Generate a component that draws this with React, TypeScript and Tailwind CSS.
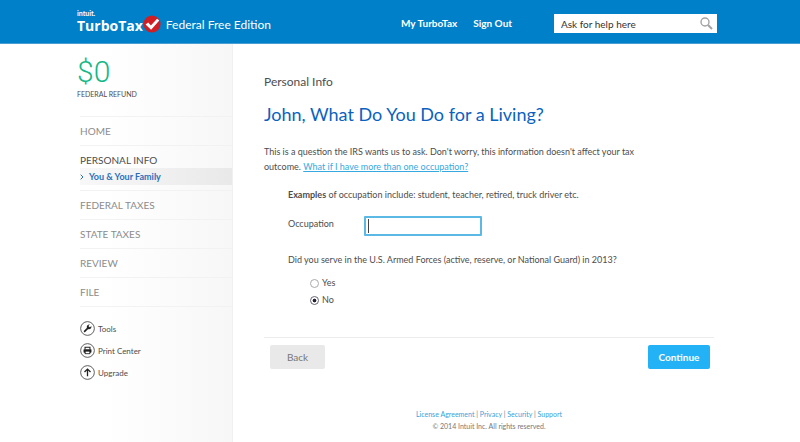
import { useState } from "react";
import type { ReactNode } from "react";

type NavItem = { label: string; current?: boolean; child?: string };

const NAV: NavItem[] = [
  { label: "HOME" },
  { label: "PERSONAL INFO", current: true, child: "You & Your Family" },
  { label: "FEDERAL TAXES" },
  { label: "STATE TAXES" },
  { label: "REVIEW" },
  { label: "FILE" },
];

const FOOTER_LINKS = ["License Agreement", "Privacy", "Security", "Support"];

export default function App() {
  return (
    <div className="flex min-h-screen flex-col bg-white font-[Lato,'Liberation_Sans',sans-serif] text-[#4d4d4d]">
      <Header />
      <div className="flex flex-1">
        <Sidebar />
        <OccupationPage />
      </div>
    </div>
  );
}

function Header() {
  return (
    <header className="flex h-[44px] items-center border-b border-[#4a9fd2] bg-[#0080c8] pr-[83px] pl-[77px] text-white">
      <a href="#" className="flex items-end">
        <span className="flex flex-col">
          <span className="text-[7px] leading-[8px] font-bold">intuit.</span>
          <span className="font-['Open_Sans',sans-serif] text-[14px] leading-[18px] font-bold">
            TurboTax
          </span>
        </span>
        <CheckBadge />
      </a>
      <span className="ml-[5px] pt-[7px] text-[12px] leading-4">Federal Free Edition</span>
      <nav className="ml-auto flex gap-4 pt-[2px] text-[10px] leading-4 font-bold">
        <a href="#">My TurboTax</a>
        <a href="#">Sign Out</a>
      </nav>
      <form
        role="search"
        className="mt-1 ml-[42px] flex h-[19px] w-[163px] items-center bg-white pr-1 pl-[7px]"
      >
        <input
          type="text"
          aria-label="Ask for help here"
          placeholder="Ask for help here"
          className="min-w-0 flex-1 text-[10px] leading-4 text-[#333] outline-none placeholder:text-[#333]"
        />
        <button type="submit" aria-label="Search">
          <svg viewBox="0 0 13 13" className="size-[13px]" fill="none" stroke="#a3a3a3">
            <circle cx="5" cy="5" r="4" strokeWidth="1.4" />
            <path d="M8 8l4 4" strokeWidth="2" />
          </svg>
        </button>
      </form>
    </header>
  );
}

function CheckBadge() {
  return (
    <svg viewBox="0 0 18 18" className="mb-[2px] size-[18px]">
      <circle cx="9" cy="9" r="8.6" fill="#cf1f24" />
      <path d="M2.6 9.6l2.6-2.2 2.7 3 6.2-6.7 2.2 1.8-8.2 9.3z" fill="#fff" />
    </svg>
  );
}

function Sidebar() {
  return (
    <aside className="w-[233px] shrink-0 border-r border-[#f0f0f0] bg-linear-to-r from-white from-45% to-[#f7f7f7] pt-3 pl-[77px]">
      <div className="font-[Roboto,sans-serif] text-[30px] leading-8 font-light text-[#14b886]">
        $0
      </div>
      <div className="text-[7px] leading-3">FEDERAL REFUND</div>
      <nav className="mt-4 ml-[3px] text-[10px]">
        <ul>
          {NAV.map((item) => (
            <li key={item.label} className="border-t border-[#f2f2f2] last:border-b">
              <a
                href="#"
                className={
                  item.current
                    ? "block pt-[6px] leading-4 text-[#4d4d4d]"
                    : "block py-[6px] leading-4 text-[#8c8c8c]"
                }
              >
                {item.label}
              </a>
              {item.child && (
                <a
                  href="#"
                  className="mb-[5px] flex h-[17px] items-center gap-[5px] bg-linear-to-r from-[#f8f8f8] to-[#e9e9e9] text-[9px] font-bold text-[#2a6ebb]"
                >
                  <svg viewBox="0 0 4 6" className="h-[6px] w-[4px]" fill="none" stroke="currentColor">
                    <path d="M.7.7L3 3 .7 5.3" />
                  </svg>
                  {item.child}
                </a>
              )}
            </li>
          ))}
        </ul>
      </nav>
      <ul className="mt-[14px] ml-[3px] flex flex-col gap-[7px] text-[8px]">
        <Tool label="Tools">
          <path d="M4.3 9.7L8 6" stroke="#222" strokeWidth="1.6" strokeLinecap="round" />
          <path
            d="M10.6 4.7L9.4 5.9 8.2 5.6 8 4.5 9.2 3.3A2.3 2.3 0 0 0 6.4 6.2l1.4 1.4A2.3 2.3 0 0 0 10.6 4.7z"
            fill="#222"
          />
        </Tool>
        <Tool label="Print Center">
          <path d="M4.7 6V4h4.6v2" stroke="#222" fill="none" />
          <rect x="3.3" y="5.8" width="7.4" height="3.2" rx=".6" fill="#222" />
          <rect x="4.8" y="7.6" width="4.4" height="2.4" fill="#fff" stroke="#222" strokeWidth=".8" />
        </Tool>
        <Tool label="Upgrade">
          <path d="M7 10.5V4M4.2 6.6L7 3.8l2.8 2.8" stroke="#222" strokeWidth="1.2" fill="none" />
        </Tool>
      </ul>
    </aside>
  );
}

function Tool({ label, children }: { label: string; children: ReactNode }) {
  return (
    <li>
      <a href="#" className="flex items-center gap-[3px]">
        <svg viewBox="0 0 14 14" className="size-[15px]">
          <circle cx="7" cy="7" r="6.4" fill="#fff" stroke="#444" strokeWidth=".8" />
          {children}
        </svg>
        {label}
      </a>
    </li>
  );
}

function OccupationPage() {
  const [occupation, setOccupation] = useState("");
  const [served, setServed] = useState("No");

  return (
    <main className="flex-1 pt-[30px] pr-[86px] pl-[31px] text-[9px]">
      <p className="text-[12px] leading-4">Personal Info</p>
      <h1 className="mt-3 text-[18px] leading-6 text-[#0a62bf]">
        John, What Do You Do for a Living?
      </h1>
      <p className="mt-[18px] max-w-[400px] leading-[15px]">
        This is a question the IRS wants us to ask. Don't worry, this information doesn't affect your
        tax outcome.{" "}
        <a href="#" className="inline-block text-[#36a9e1] underline">
          What if I have more than one occupation?
        </a>
      </p>

      <form className="pl-6">
        <p className="mt-[13px] leading-4">
          <b>Examples</b> of occupation include: student, teacher, retired, truck driver etc.
        </p>
        <div className="mt-[13px] flex items-start">
          <label htmlFor="occupation" className="w-[76px] leading-4">
            Occupation
          </label>
          <div className="flex h-5 w-[118px] items-center rounded-[1px] border-2 border-[#5cb8e4] bg-white pl-[2px]">
            <span className="h-[14px] w-px bg-[#444]" />
            <input
              id="occupation"
              type="text"
              value={occupation}
              onChange={(e) => setOccupation(e.target.value)}
              className="min-w-0 flex-1 outline-none"
            />
          </div>
        </div>
        <fieldset className="mt-4">
          <legend className="leading-4">
            Did you serve in the U.S. Armed Forces (active, reserve, or National Guard) in 2013?
          </legend>
          <div className="mt-[7px] flex flex-col gap-px pl-[22px]">
            {["Yes", "No"].map((answer) => (
              <label key={answer} className="flex items-center gap-[3px] leading-4">
                <input
                  type="radio"
                  name="served"
                  checked={served === answer}
                  onChange={() => setServed(answer)}
                  className="size-[9px] appearance-none rounded-full border border-[#aaa] bg-white checked:border-[#667] checked:bg-radial checked:from-[#223] checked:from-30% checked:to-white checked:to-45%"
                />
                {answer}
              </label>
            ))}
          </div>
        </fieldset>
      </form>

      <div className="mt-[29px] flex justify-between border-t border-[#ececec] pt-[7px] pr-1 pl-[6px] text-[10px]">
        <button type="button" className="h-6 w-[55px] rounded-xs bg-[#e9e9e9] text-[#777]">
          Back
        </button>
        <button type="button" className="h-6 w-[62px] rounded-xs bg-[#22b2f5] font-bold text-white">
          Continue
        </button>
      </div>

      <footer className="mt-[39px] text-center text-[7px] leading-3 text-[#777]">
        <p>
          {FOOTER_LINKS.map((link, i) => (
            <span key={link}>
              {i > 0 && " | "}
              <a href="#" className="text-[#3b9fd8]">
                {link}
              </a>
            </span>
          ))}
        </p>
        <p>© 2014 Intuit Inc. All rights reserved.</p>
      </footer>
    </main>
  );
}
